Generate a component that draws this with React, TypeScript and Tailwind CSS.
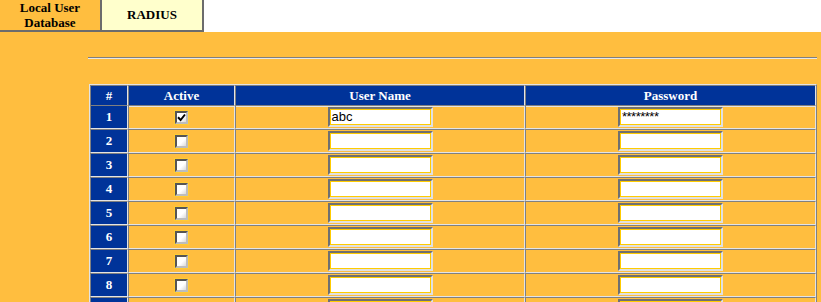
import React from "react";

const serif = "[font-family:'Liberation_Serif','Times_New_Roman',serif]";

const rows = [1, 2, 3, 4, 5, 6, 7, 8, 9, 10];

const Check = ({ on }: { on: boolean }) => (
  <span className="inline-flex w-[15px] h-[15px] bg-[#ffcc33] p-[1px]">
    <span className="relative block w-[13px] h-[13px] border-2 border-t-[#555555] border-l-[#555555] border-b-[#bdbdbd] border-r-[#bdbdbd] bg-gradient-to-br from-white from-55% to-[#dadada]">
      {on && (
        <svg viewBox="0 0 9 9" className="absolute left-0 top-0 w-[9px] h-[9px]">
          <path d="M1 4.2 L3.6 7 L8 1.5" fill="none" stroke="#000" strokeWidth="2" />
        </svg>
      )}
    </span>
  </span>
);

const Field = ({ value, pw }: { value?: string; pw?: boolean }) => (
  <span className="inline-flex w-[105px] h-[20px] border-2 border-t-[#707070] border-l-[#707070] border-b-[#e0e0e0] border-r-[#e0e0e0]">
    <span
      className={`flex-1 bg-white border border-[#ffcc00] px-[1px] text-[13px] text-black [font-family:'Liberation_Sans',Arial,sans-serif] leading-[14px] ${pw ? "tracking-[-0.5px]" : ""}`}
    >
      {value}
    </span>
  </span>
);

const cell = "border border-t-[#808080] border-l-[#808080] border-b-[#e4e4e4] border-r-[#e4e4e4] flex items-center justify-center";

export default function App() {
  return (
    <div className="w-[821px] h-[302px] overflow-hidden bg-[#ffbe3f]">
      <div className="flex h-[32px] bg-white">
        <div className={`w-[102px] h-[32px] bg-[#ffbe3f] border-r-2 border-b-2 border-[#6c6c6c] flex items-center justify-center text-center text-[13px] font-bold leading-[15px] text-black ${serif}`}>
          Local User
          <br />
          Database
        </div>
        <div className={`w-[102px] h-[32px] bg-[#ffffcc] border-r-2 border-b-2 border-[#6c6c6c] flex items-center justify-center text-[13px] font-bold text-black ${serif}`}>
          RADIUS
        </div>
      </div>

      <div className="pt-[25px]">
        <div className="ml-[88px] w-[729px] h-[2px] border-t border-t-[#808080] border-b border-b-[#e8e8e8]" />

        <div className="ml-[89px] mt-[25px] w-[728px] border border-t-[#e4e4e4] border-l-[#e4e4e4] border-b-[#808080] border-r-[#808080]">
          <div className={`grid grid-cols-[38px_107px_290px_291px] h-[20px] bg-[#003399] text-white text-[13px] font-bold ${serif}`}>
            <div className={cell}>#</div>
            <div className={cell}>Active</div>
            <div className={cell}>User Name</div>
            <div className={cell}>Password</div>
          </div>
          {rows.map((n) => (
            <div key={n} className="grid grid-cols-[38px_107px_290px_291px] h-[24px]">
              <div className={`${cell} bg-[#003399] text-white text-[13px] font-bold ${serif}`}>{n}</div>
              <div className={cell}>
                <Check on={n === 1} />
              </div>
              <div className={cell}>
                <Field value={n === 1 ? "abc" : ""} />
              </div>
              <div className={cell}>
                <Field value={n === 1 ? "********" : ""} pw />
              </div>
            </div>
          ))}
        </div>
      </div>
    </div>
  );
}
